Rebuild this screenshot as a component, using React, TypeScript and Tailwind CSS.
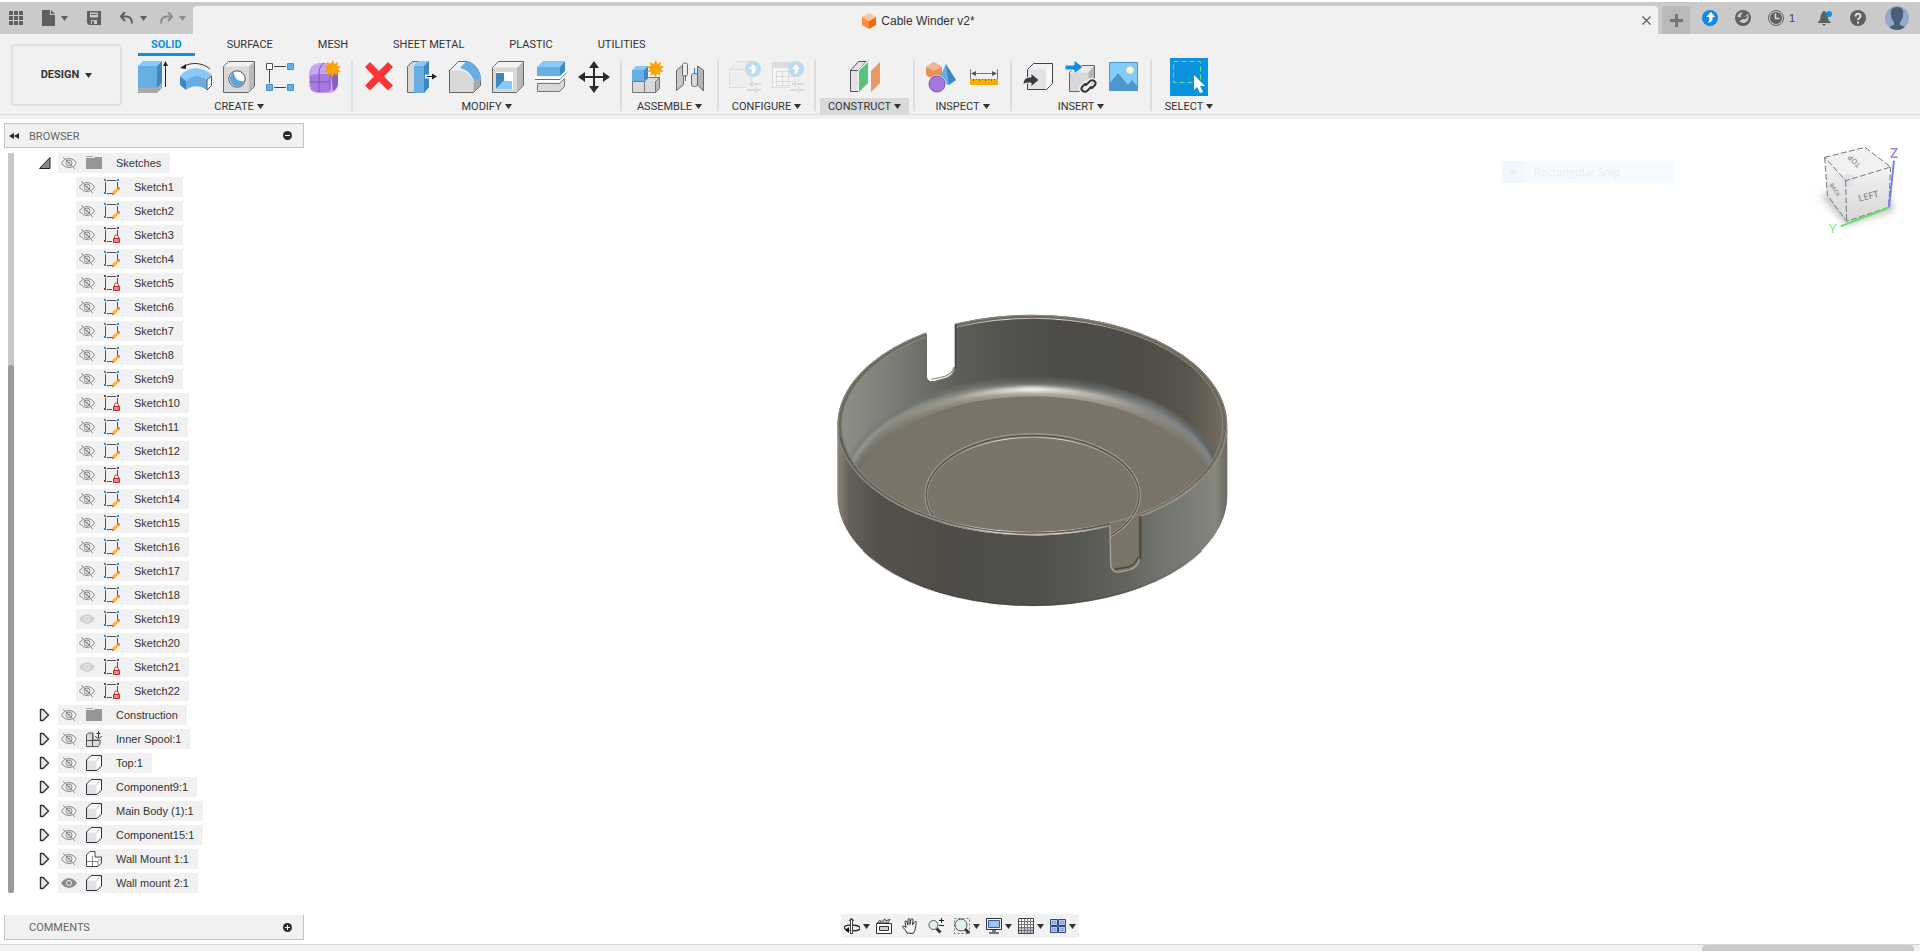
import { ReactNode, useState } from 'react';

type IconName =
  | 'extrude' | 'revolve' | 'hole' | 'sketch' | 'form'
  | 'delete' | 'pressPull' | 'fillet' | 'shell' | 'split' | 'move'
  | 'newComponent' | 'joint' | 'configure' | 'configTable' | 'plane'
  | 'interference' | 'measure' | 'derive' | 'link' | 'canvas';

interface ToolGroup {
  label: string;
  icons: IconName[];
}

interface TreeItem {
  name: string;
  kind: 'folder' | 'sketch' | 'locked' | 'anchored' | 'component' | 'assembly';
  visibility: 'hidden' | 'dimmed' | 'visible';
  child?: boolean;
  open?: boolean;
}

const TABS = ['SOLID', 'SURFACE', 'MESH', 'SHEET METAL', 'PLASTIC', 'UTILITIES'];

const GROUPS: ToolGroup[] = [
  { label: 'CREATE', icons: ['extrude', 'revolve', 'hole', 'sketch', 'form'] },
  { label: 'MODIFY', icons: ['delete', 'pressPull', 'fillet', 'shell', 'split', 'move'] },
  { label: 'ASSEMBLE', icons: ['newComponent', 'joint'] },
  { label: 'CONFIGURE', icons: ['configure', 'configTable'] },
  { label: 'CONSTRUCT', icons: ['plane'] },
  { label: 'INSPECT', icons: ['interference', 'measure'] },
  { label: 'INSERT', icons: ['derive', 'link', 'canvas'] },
];

const LOCKED_SKETCHES = [3, 5, 10, 13, 21, 22];
const DIMMED_SKETCHES = [19, 21];

const TREE: TreeItem[] = [
  { name: 'Sketches', kind: 'folder', visibility: 'hidden', open: true },
  ...Array.from({ length: 22 }, (_, i): TreeItem => ({
    name: `Sketch${i + 1}`,
    kind: LOCKED_SKETCHES.includes(i + 1) ? 'locked' : 'sketch',
    visibility: DIMMED_SKETCHES.includes(i + 1) ? 'dimmed' : 'hidden',
    child: true,
  })),
  { name: 'Construction', kind: 'folder', visibility: 'hidden' },
  { name: 'Inner Spool:1', kind: 'anchored', visibility: 'hidden' },
  { name: 'Top:1', kind: 'component', visibility: 'hidden' },
  { name: 'Component9:1', kind: 'component', visibility: 'hidden' },
  { name: 'Main Body (1):1', kind: 'component', visibility: 'hidden' },
  { name: 'Component15:1', kind: 'component', visibility: 'hidden' },
  { name: 'Wall Mount 1:1', kind: 'assembly', visibility: 'hidden' },
  { name: 'Wall mount 2:1', kind: 'component', visibility: 'visible' },
];

const Caret = ({ className = 'text-[#333]' }: { className?: string }) => (
  <svg width="7" height="5" viewBox="0 0 7 5" className={`shrink-0 ${className}`}>
    <path d="M0 0h7L3.5 5z" fill="currentColor" />
  </svg>
);

const STAR =
  'M24 -1l1.4 4.2 3.6-2.4-1 4.2 4.4.4-3.6 2.6 3.2 3-4.4-.2.8 4.2-3.2-2.6-1.8 4-1.8-4-3.2 2.6.8-4.2-4.2.2 3.2-3-3.8-2.6 4.4-.4-1-4.2 3.8 2.4z';

const TOOL_ICONS: Record<IconName, ReactNode> = {
  extrude: (
    <>
      <path d="M1 27h19l5-5v5l-5 5H1z" fill="#a9a9a9" />
      <path d="M1 5h19v22H1z" fill="#66aee3" />
      <path d="M1 5l5-5h19l-5 5z" fill="#87c9fb" />
      <path d="M20 5l5-5v22l-5 5z" fill="#3f88bd" />
      <path d="M28.5 26V4" stroke="#222" />
      <path d="M28.5 0l2.5 5h-5z" fill="#222" />
    </>
  ),
  revolve: (
    <>
      <path d="M0 15C9 5 23 5 32 14l-5 5C20 13 12 14 6 20z" fill="#87c9fb" />
      <path d="M0 15l6 5v9l-6-5z" fill="#3f88bd" />
      <path d="M6 20c6-6 14-7 21-1v10c-7-5-15-5-21 0z" fill="#66aee3" />
      <path d="M27 19l4.500-4v9.500l-4.500 4.500z" fill="#fff" stroke="#555" />
      <path d="M3 6C10 1 22 1 30 8" fill="none" stroke="#333" />
      <path d="M0 7l6-4v5z" fill="#222" />
    </>
  ),
  hole: (
    <>
      <path d="M.5 5.500L5.500.5h26v25l-6 6H.5z" fill="#d8d8d8" stroke="#666" />
      <path d="M1 5.500L5.500 1H31l-5 4.500z" fill="#f1f1f1" />
      <path d="M26 5.500L31 1v24.500L26 31z" fill="#b9b9b9" />
      <circle cx="14" cy="18" r="8.200" fill="#fff" stroke="#555" />
      <path d="M11 11c0 6 4 10 10 9-1 8-14 7-14-2 0-3 2-6 4-7z" fill="#5ba5dc" />
    </>
  ),
  sketch: (
    <>
      <path d="M8 5.500h12M3.500 9v13M8 26.500h12" stroke="#444" />
      <path d="M.5 2.500h6v6h-6z" fill="#fff" stroke="#555" />
      <path d="M21.500 2.500h6v6h-6zM.5 23.500h6v6h-6zM21.500 23.500h6v6h-6z" fill="#66aee3" stroke="#4c94c9" />
    </>
  ),
  form: (
    <>
      <path d="M0 14c0-7 4-12 11-12h9c7 0 9 5 9 10v10c0 6-4 10-9 10H9c-6 0-9-4-9-9z" fill="#c9a5f2" />
      <path d="M22 12h7v10c0 4-2 6-5 8z" fill="#8a5cc4" />
      <path d="M1 15c3-2 7-2 9-2h11v17c-6 2-15 2-18-1-2-3-2-9-2-14z" fill="#a87ae0" />
      <path d="M10 13v18M1 21h20M10 13c0-6 2-9 5-11M21 13c3-2 6-3 8-3M21 13v16" fill="none" stroke="#7d51b5" />
      <path d={STAR} fill="#f7a400" />
    </>
  ),
  delete: <path d="M2 6l5-5 9 9 9-9 5 5-9 9.500 9 9-5 5-9-9-9 9-5-5 9-9z" fill="#fb3434" />,
  pressPull: (
    <>
      <path d="M1.500 5.500l5-5h14l-5 5v26h-14z" fill="#d8d8d8" stroke="#666" />
      <path d="M8 5l5-5h10v26l-5 6H8z" fill="#66aee3" />
      <path d="M8 5l5-5h10l-5 5z" fill="#87c9fb" />
      <path d="M18 5l5-5v26l-5 6z" fill="#3f88bd" />
      <path d="M19 13.500h8v-3l5 5-5 5v-3h-8z" fill="#f1f1f1" />
      <path d="M21 15.500h6" stroke="#222" strokeWidth="1" />
      <path d="M26 12.500l5 3-5 3z" fill="#222" />
    </>
  ),
  fillet: (
    <>
      <path d="M.5 9.500L9.500.5H17c8 1 14 8 14.500 18v6l-7 7H.5z" fill="#f1f1f1" stroke="#666" />
      <path d="M.5 9.500H11c7 1 13 6 13.500 14v8H.5z" fill="#d8d8d8" />
      <path d="M24.500 21l7-4v7l-7 7z" fill="#a9a9a9" />
      <path d="M11 7l6-6.500c8 1 14 8 15 17l-7 3c-2-7-7-12-14-13.500z" fill="#66aee3" />
      <path d="M.5 9.500L9.500.5H12M.5 9.500v22h24l7-7v-4" fill="none" stroke="#666" />
    </>
  ),
  shell: (
    <>
      <path d="M.5 6.500l6-6h25v24l-7 7H.5z" fill="#d8d8d8" stroke="#666" />
      <path d="M1 6.500L6.500 1H31l-6 5.500z" fill="#f3f3f3" />
      <path d="M25 7l6-6v23.500L25 31z" fill="#b9b9b9" />
      <path d="M4 11h17v17H4z" fill="#fff" />
      <path d="M4 12h8v8l-8 8z" fill="#3f88bd" />
      <path d="M12 12h9v8h-9z" fill="#fff" />
      <path d="M4 28l7-8h9v8z" fill="#87c9fb" />
    </>
  ),
  split: (
    <>
      <path d="M2.500 22.500h22l5-5v8l-5 5h-22z" fill="#d8d8d8" stroke="#777" />
      <path d="M2 6h23v9H2z" fill="#66aee3" />
      <path d="M2 6l6-6h22l-5 6z" fill="#87c9fb" />
      <path d="M25 6l5-6v10l-5 5z" fill="#3f88bd" />
      <path d="M0 18.500h25l7-7" fill="none" stroke="#fff" strokeWidth="4" />
      <path d="M0 18.500h25l7-7" fill="none" stroke="#1485d6" strokeWidth="1" />
    </>
  ),
  move: (
    <>
      <path d="M16 4v24M4 16h24" stroke="#2b2b2b" strokeWidth="2" />
      <path d="M16 0l5 7H11zM16 32l5-7H11zM0 16l7-5v10zM32 16l-7-5v10z" fill="#2b2b2b" />
    </>
  ),
  newComponent: (
    <>
      <path d="M.5 20.500h12v11H.5zM12.500 20.500l4-4h11l-4 4v11h-11z" fill="#dadada" stroke="#777" />
      <path d="M23.500 20.500l4-4v11l-4 4z" fill="#b9b9b9" stroke="#777" />
      <path d="M0 9h12v11H0z" fill="#66aee3" />
      <path d="M0 9l4-4h12l-4 4z" fill="#87c9fb" />
      <path d="M12 9l4-4v12l-4 3z" fill="#3f88bd" />
      <path d={STAR} fill="#f7a400" />
    </>
  ),
  joint: (
    <>
      <path d="M1.500 9.500l7-6v20l-7 6z" fill="#c8c8c8" stroke="#666" />
      <path d="M7.500 3.500c1-2 5-2 5 0v10c0 2-4 2-5 1z" fill="#ededed" stroke="#666" />
      <path d="M28.500 9l-6-4v19l6 6z" fill="#b5b5b5" stroke="#666" />
      <path d="M16.500 14c1-2 6-2 6 0v10c-1 2-5 2-6 0z" fill="#dadada" stroke="#666" />
      <path d="M10.500 14v6M19.500 7v6" stroke="#1485d6" strokeWidth="1" />
    </>
  ),
  configure: (
    <>
      <path d="M.5 8.500l8-8H22v26H.5z" fill="#eee" stroke="#ddd" />
      <path d="M1 8.500h17" stroke="#ddd" />
      <circle cx="24" cy="8" r="8" fill="#bcdcf1" />
      <path d="M24 3l-4 5h2c2 1 1 3 0 5 4-1 5-2 4-5h2z" fill="#fff" />
      <path d="M18 21h14v11H18z" fill="#f1f1f1" />
      <path d="M20 23h12M18 29h14" stroke="#d9d9d9" strokeWidth="2" />
      <path d="M23 20v6M27 26v6" stroke="#cfe2ee" strokeWidth="2" />
    </>
  ),
  configTable: (
    <>
      <path d="M.5 1.500h26v25H.5z" fill="#f4f4f4" stroke="#dcdcdc" />
      <path d="M0 1h27v6H0z" fill="#ddd" />
      <path d="M4 10.500h19M4 15.500h19M4 20.500h19M4.500 10v14M10.500 10v14M16.500 10v14M22.500 10v14M4 24.500h19" stroke="#ddd" />
      <circle cx="24" cy="8" r="8" fill="#bcdcf1" />
      <path d="M24 3l-4 5h2c2 1 1 3 0 5 4-1 5-2 4-5h2z" fill="#fff" />
      <path d="M18 21h14v11H18z" fill="#f1f1f1" />
      <path d="M20 23h12M18 29h14" stroke="#d9d9d9" strokeWidth="2" />
      <path d="M23 20v6M27 26v6" stroke="#cfe2ee" strokeWidth="2" />
    </>
  ),
  plane: (
    <>
      <path d="M1.500 9.500l8-9H17v22l-8 8H1.500z" fill="#e3e3e3" stroke="#555" />
      <path d="M1.500 9.500H9l8-9" fill="none" stroke="#555" />
      <path d="M9 9l10-10v24L9 31z" fill="#f1f1f1" />
      <path d="M10 10l9-9v21l-9 9z" fill="#59c37d" />
      <path d="M22 10l9-9v21l-9 9z" fill="#e69a66" />
    </>
  ),
  interference: (
    <>
      <path d="M1 6l8-5 8 5v8l-8 5-8-5z" fill="#e59158" />
      <path d="M1 6l8-5 8 5-8 4z" fill="#f2b78f" />
      <path d="M21 3l10 16-7 5-10-5z" fill="#3986c0" />
      <path d="M21 3l3 21-10-5z" fill="#66aee3" />
      <circle cx="12" cy="23" r="9" fill="#f1f1f1" />
      <circle cx="12" cy="23" r="8" fill="#a27add" stroke="#7f52bd" />
    </>
  ),
  measure: (
    <>
      <path d="M2.500 8v10M29.500 8v10M4 12.500h24" stroke="#777" />
      <path d="M3 12.500l5-2.500v5zM29 12.500l-5-2.500v5z" fill="#555" />
      <path d="M2 18h28v6H2z" fill="#f9ad00" />
      <path d="M5.500 18v2M8.500 18v1M11.500 18v2M14.500 18v1M17.500 18v2M20.500 18v1M23.500 18v2M26.500 18v1" stroke="#8a6200" />
    </>
  ),
  derive: (
    <>
      <path d="M5.500 8.500l6-6h19v20l-6 6h-19z" fill="#f0f0f2" stroke="#444" />
      <path d="M6 8.500h18.500V28H6z" fill="#e2e3e8" />
      <path d="M24.500 8.500L30 3v19.500L24.500 28z" fill="#fafafa" />
      <path d="M1 24c0-6 3-8 8-8v-4l8 7-8 7v-4c-4 0-6 0-8 2z" fill="#3c3c3c" stroke="#f1f1f1" />
    </>
  ),
  link: (
    <>
      <path d="M4.500 11.500l6-7h19v20l-6 6h-19z" fill="#e9e9e9" stroke="#666" />
      <path d="M5 11.500h18.500V30H5z" fill="#d8d8d8" />
      <path d="M23.500 11.500L29 5v19.500L23.500 30z" fill="#b3b3b3" />
      <path d="M0 4h9V-1l9 7-9 7V9H0z" fill="#168be2" stroke="#f1f1f1" />
      <g fill="none" strokeLinecap="round">
        <path d="M21 24l4-4c3-2 7 1 5 4l-3 3M26 26l-4 4c-3 2-7-1-5-4l3-3" stroke="#f1f1f1" strokeWidth="5" />
        <path d="M21 24l4-4c3-2 7 1 5 4l-3 3M26 26l-4 4c-3 2-7-1-5-4l3-3" stroke="#333" strokeWidth="2" />
      </g>
    </>
  ),
  canvas: (
    <>
      <path d="M1 1h29v29H1z" fill="#84cbfd" />
      <circle cx="22" cy="9" r="3.500" fill="#fffbd0" stroke="#d8e8c0" />
      <path d="M1 23l9-11 10 12 4-5 6 7v4H1z" fill="#4c97cd" />
      <path d="M1.500 1.500h28v28h-28z" fill="none" stroke="#4c97cd" />
    </>
  ),
};

const ToolIcon = ({ name }: { name: IconName }) => (
  <svg width="32" height="32" viewBox="0 0 32 32" className="overflow-visible">
    {TOOL_ICONS[name]}
  </svg>
);

const GroupLabel = ({ label, active = false }: { label: string; active?: boolean }) => (
  <button
    type="button"
    className={`flex h-[17px] items-center gap-[3px] px-2 text-[11px] leading-4 text-[#333] ${
      active ? 'bg-[#d9d9d9]' : ''
    }`}
  >
    {label}
    <Caret />
  </button>
);

const TopBar = () => (
  <header className="mt-[2px] flex h-8 items-end bg-[#cacaca] text-[#5f5f5f]">
    <div className="flex h-8 w-[193px] shrink-0 items-center pl-[9px]">
      <button type="button" aria-label="Data panel">
        <svg width="14" height="14" viewBox="0 0 14 14" fill="currentColor">
          <path d="M0 0h4v4H0zM5 0h4v4H5zM10 0h4v4h-4zM0 5h4v4H0zM5 5h4v4H5zM10 5h4v4h-4zM0 10h4v4H0zM5 10h4v4H5zM10 10h4v4h-4z" />
        </svg>
      </button>
      <button type="button" aria-label="File" className="ml-[19px] flex items-center gap-[6px]">
        <svg width="13" height="16" viewBox="0 0 13 16" fill="currentColor">
          <path d="M0 0h8v5h5v11H0zM9 0l4 4H9z" />
        </svg>
        <Caret className="text-[#5f5f5f]" />
      </button>
      <button type="button" aria-label="Save" className="ml-[19px]">
        <svg width="14" height="14" viewBox="0 0 14 14">
          <path d="M0 0h14v14H2l-2-2z" fill="currentColor" />
          <path d="M3 1.500h8v5H3zM4 9h6v4H4z" fill="#cacaca" />
          <path d="M4 3h6v1H4zM5 10h2v3H5z" fill="currentColor" />
        </svg>
      </button>
      <button type="button" aria-label="Undo" className="ml-[19px] flex items-center gap-[7px]">
        <svg width="13" height="12" viewBox="0 0 13 12" fill="none" stroke="currentColor" strokeWidth="2">
          <path d="M5 0L1 4.500 5 9M1 4.500h5c4 0 6 2 6 7" />
        </svg>
        <Caret className="text-[#5f5f5f]" />
      </button>
      <button type="button" aria-label="Redo" className="ml-[13px] flex items-center gap-[6px] text-[#8e8e8e]">
        <svg width="13" height="12" viewBox="0 0 13 12" fill="none" stroke="currentColor" strokeWidth="2">
          <path d="M8 0l4 4.500L8 9M12 4.500H7c-4 0-6 2-6 7" />
        </svg>
        <Caret className="text-[#8e8e8e]" />
      </button>
    </div>

    <div className="flex h-7 flex-1 items-center rounded-t bg-[#f1f1f1] pl-1 pr-[6px] pt-px">
      <div className="flex flex-1 items-center justify-center gap-[5px]">
        <svg width="14" height="16" viewBox="0 0 14 16">
          <path d="M0 4l7 4v8l-7-4z" fill="#ff8b3d" />
          <path d="M14 4L7 8v8l7-4z" fill="#f56a00" />
          <path d="M0 4l7-4 7 4-7 4z" fill="#ffc49b" />
        </svg>
        <h1 className="font-['Liberation_Sans',sans-serif] text-xs text-[#333]">Cable Winder v2*</h1>
      </div>
      <button type="button" aria-label="Close document" className="flex w-3 justify-center">
        <svg width="9" height="9" viewBox="0 0 9 9" stroke="#666" strokeWidth="1.400">
          <path d="M.5.5l8 8M8.500.5l-8 8" />
        </svg>
      </button>
    </div>

    <button
      type="button"
      aria-label="New design"
      className="ml-1 flex h-7 w-7 items-center justify-center rounded-t bg-[#b9b9b9]"
    >
      <svg width="13" height="13" viewBox="0 0 13 13" fill="#757575">
        <path d="M5 0h3v5h5v3H8v5H5V8H0V5h5z" />
      </svg>
    </button>

    <div className="flex h-8 w-[230px] shrink-0 items-center pl-3">
      <button type="button" aria-label="Updates">
        <svg width="16" height="16" viewBox="0 0 16 16">
          <circle cx="8" cy="8" r="8" fill="#1389e5" />
          <path d="M9 2L4 7h3c1 2 0 4-1 6 4-1 5-3 4.500-6H13z" fill="#fff" />
        </svg>
      </button>
      <button type="button" aria-label="Extensions" className="ml-[17px]">
        <svg width="16" height="16" viewBox="0 0 16 16">
          <circle cx="8" cy="8" r="8" fill="currentColor" />
          <path d="M2.500 7c0-3 3-5 5-4.500v3L9 7l4-3.500c1.500 4 .5 9-4 9.500-2 .2-4-1-5-2l4-3z" fill="#cacaca" />
          <path d="M6 8c-1-3 1-5 3-5l-1 3 2 1 2.500-2c0 3-2 5-5 4l-4 3-1-2z" fill="currentColor" />
        </svg>
      </button>
      <button type="button" aria-label="Job status" className="ml-[17px] flex items-center gap-[5px]">
        <svg width="16" height="16" viewBox="0 0 16 16">
          <circle cx="8" cy="8" r="7.500" fill="none" stroke="currentColor" />
          <circle cx="8" cy="8" r="6" fill="currentColor" />
          <path d="M7.500 3.500v5h4" fill="none" stroke="#ddd" strokeWidth="1.500" />
        </svg>
        <span className="font-['Liberation_Sans',sans-serif] text-[11px] text-[#4b3a68]">1</span>
      </button>
      <button type="button" aria-label="Notifications" className="ml-[22px]">
        <svg width="16" height="16" viewBox="0 0 16 16" fill="currentColor">
          <path d="M1 12c3-2 2-4 3-7 .5-2 2-2.500 2-4h2c0 1.500 2 2 2.500 4 1 3 0 5 3 7v1H1zM5 14h4l-2 2z" />
          <circle cx="12" cy="4" r="3" fill="#0a93dc" />
        </svg>
      </button>
      <button type="button" aria-label="Help" className="ml-[17px]">
        <svg width="16" height="16" viewBox="0 0 16 16">
          <circle cx="8" cy="8" r="8" fill="currentColor" />
          <path d="M5.500 6.500C5.500 3 10.500 3 10.500 6c0 2-2.500 2-2.500 4M8 11.500v2" fill="none" stroke="#ddd" strokeWidth="2" />
        </svg>
      </button>
      <button type="button" aria-label="Account" className="ml-[19px]">
        <svg width="24" height="24" viewBox="0 0 24 24">
          <defs>
            <clipPath id="avatar"><circle cx="12" cy="12" r="12" /></clipPath>
          </defs>
          <g clipPath="url(#avatar)">
            <path d="M0 0h24v24H0z" fill="#95a9c6" />
            <path d="M12 1c5 0 7 3 6 7 0 4-1 6-3 8v3c3 1 5 2 7 5H2c2-3 4-4 7-5v-3c-2-2-3-4-3-8-1-4 1-7 6-7z" fill="#4b5d77" />
          </g>
        </svg>
      </button>
    </div>
  </header>
);

const Ribbon = () => {
  const [activeTab, setActiveTab] = useState('SOLID');

  return (
    <div className="flex h-[85px] border-b-4 border-[#f1f1f1] bg-[#f1f1f1] shadow-[inset_0_-1px_0_#dcdcdc]">
      <button
        type="button"
        className="ml-[11px] mt-[10px] flex h-[62px] w-[111px] shrink-0 items-center justify-center gap-[6px] rounded border-2 border-[#e0e0e0] text-[11px] font-bold text-[#333]"
      >
        DESIGN
        <Caret />
      </button>

      <div className="ml-[5px] flex flex-col">
        <nav className="flex gap-[19px] pl-[11px]">
          {TABS.map((tab) => (
            <button
              key={tab}
              type="button"
              onClick={() => setActiveTab(tab)}
              className={`h-[22px] whitespace-nowrap border-b-[3px] px-[13px] pt-[3px] text-[11px] leading-4 ${
                tab === activeTab
                  ? 'border-[#0a93dc] font-bold text-[#0a93dc]'
                  : 'border-transparent text-[#333]'
              }`}
            >
              {tab}
            </button>
          ))}
        </nav>

        <div className="flex">
          {GROUPS.map(({ label, icons }) => (
            <div key={label} className="flex">
              <div
                className={`flex flex-col items-center pt-[5px] ${
                  label === 'CONSTRUCT' ? 'w-[97px]' : 'px-[10px]'
                }`}
              >
                <div className="flex gap-[11px]">
                  {icons.map((icon) => (
                    <button key={icon} type="button" aria-label={icon}>
                      <ToolIcon name={icon} />
                    </button>
                  ))}
                </div>
                <div className="mt-[5px] flex w-0 justify-center">
                  <GroupLabel label={label} active={label === 'CONSTRUCT'} />
                </div>
              </div>
              <div className="mt-1 h-[51px] w-[2px] bg-[#dedede]" />
            </div>
          ))}
          <div className="flex w-[74px] flex-col items-center pt-[2px]">
            <button type="button" aria-label="Select" className="bg-[#0a93dc]">
              <svg width="38" height="38" viewBox="0 0 38 38">
                <path d="M3.500 3.500h27v21h-27z" fill="none" stroke="#6fe08c" strokeDasharray="5 3" />
                <path d="M24 17v15l3-3 3 6 3-1-3-6h5z" fill="#fff" />
              </svg>
            </button>
            <div className="mt-[2px]">
              <GroupLabel label="SELECT" />
            </div>
          </div>
        </div>
      </div>
    </div>
  );
};

const EyeIcon = ({ visibility }: { visibility: TreeItem['visibility'] }) => {
  if (visibility === 'hidden') {
    return (
      <svg width="16" height="14" viewBox="0 0 16 14" fill="none" stroke="#8d8d8d">
        <path d="M.5 7C4 1 12 1 15.500 7 12 13 4 13 .5 7z" />
        <circle cx="8" cy="7" r="3" />
        <circle cx="8" cy="7" r="1" />
        <path d="M2 1l12 12" />
      </svg>
    );
  }
  const color = visibility === 'dimmed' ? '#d2d2d2' : '#8b8b8b';
  return (
    <svg width="16" height="14" viewBox="0 0 16 14">
      <path d="M0 7C4 .5 12 .5 16 7 12 13.500 4 13.500 0 7z" fill={color} />
      <circle cx="8" cy="7" r="2.500" fill={color} stroke="#f1f1f1" />
    </svg>
  );
};

const KindIcon = ({ kind }: { kind: TreeItem['kind'] }) => (
  <svg width="16" height="16" viewBox="0 0 16 16" className="overflow-visible">
    {kind === 'folder' && (
      <>
        <path d="M0 1h7v1H0z" fill="#aaa" />
        <path d="M0 3h8l1-1h7v12H0z" fill="#969696" />
      </>
    )}
    {(kind === 'sketch' || kind === 'locked') && (
      <>
        <path d="M3 1.500h9M1.500 3v10M13.500 3v6M3 14.500h5" stroke="#555" />
        <path
          d="M0 0h2v2H0zM13 0h2v2h-2zM0 13h2v2H0z"
          fill={kind === 'sketch' ? '#168be2' : '#555'}
        />
      </>
    )}
    {kind === 'sketch' && (
      <>
        <path d="M8 13l5-4 2 2-4 4-2 1z" fill="#fbb93a" />
        <path d="M13 9l1-1 2 1-1 2z" fill="#f4434b" />
        <path d="M8 14l2 1-2 1z" fill="#666" />
      </>
    )}
    {kind === 'locked' && (
      <>
        <path d="M10.500 11V9.500c0-2 4-2 4 0V11" fill="none" stroke="#c43a3d" />
        <path d="M9.500 11.500h6v4h-6z" fill="#dd8c8e" stroke="#c4282c" />
      </>
    )}
    {kind === 'component' && (
      <>
        <path d="M.5 5L5 .5h10.500V11L11 15.500H.5z" fill="#fff" stroke="#333" strokeLinejoin="round" />
        <path d="M1 5.500h9.500V15H1z" fill="#dfe2e8" />
        <path d="M10.500 5.500L15 1" stroke="#bbb" />
      </>
    )}
    {kind === 'assembly' && (
      <>
        <path d="M.5 4L4 .5h5V6h6.500v6L12 15.500H.5z" fill="#fff" stroke="#444" strokeLinejoin="round" />
        <path d="M1 10.500h11l3-3M6.500 15V5M12 10.500V15" fill="none" stroke="#888" />
      </>
    )}
    {kind === 'anchored' && (
      <>
        <path d="M.5 4l2-2H7v7h7v4l-2 2.500H.5z" fill="#dcdcdc" stroke="#555" />
        <path d="M1 9.500h12M6.500 3v12" stroke="#555" />
        <path d="M12.500 0v7M10.500 2.500h4M9.500 5c1 3 5 3 6 0" fill="none" stroke="#333" />
      </>
    )}
  </svg>
);

const Expander = ({ open }: { open?: boolean }) => (
  <svg width="12" height="14" viewBox="0 0 12 14">
    {open ? (
      <path d="M.5 12.500L11 1.500v11z" fill="#888" stroke="#222" />
    ) : (
      <path d="M1.500 1.500H4L9.500 7 4 12.500H1.500z" fill="#e8e8ec" stroke="#333" strokeWidth="1.400" />
    )}
  </svg>
);

const BrowserTree = () => (
  <div className="ml-1 mt-[5px] flex">
    <div className="flex w-[6px] flex-col bg-[#c9c9c9]">
      <div className="mt-[212px] flex-1 rounded-full bg-[#9b9b9b]" />
    </div>
    <ul className="ml-[25px] flex flex-col gap-1">
      {TREE.map((item) => (
        <li key={item.name} className="flex h-5 items-center">
          <div className={item.child ? 'w-[37px]' : 'w-[19px]'}>
            {!item.child && (
              <button type="button" aria-label={`Expand ${item.name}`} className="flex">
                <Expander open={item.open} />
              </button>
            )}
          </div>
          <div className="flex h-5 items-center bg-[#f1f1f1] pl-[3px] pr-[9px]">
            <button type="button" aria-label={`Toggle ${item.name}`}>
              <EyeIcon visibility={item.visibility} />
            </button>
            <button type="button" className="ml-[9px] flex items-center gap-[14px] whitespace-nowrap">
              <KindIcon kind={item.kind} />
              <span className="font-['Liberation_Sans',sans-serif] text-[11px] leading-5 text-[#333]">
                {item.name}
              </span>
            </button>
          </div>
        </li>
      ))}
    </ul>
  </div>
);

const PanelHeader = ({ title, collapsed = false }: { title: string; collapsed?: boolean }) => (
  <div
    className={`flex h-[25px] items-center border border-[#c4c4c4] bg-[#f1f1f1] pl-1 pr-[11px] ${
      collapsed ? 'border-t-0' : ''
    }`}
  >
    <div className="w-5">
      {!collapsed && (
        <svg width="10" height="6" viewBox="0 0 10 6" fill="#2b2b2b">
          <path d="M5 0v6L0 3zM10 0v6L5 3z" />
        </svg>
      )}
    </div>
    <h2 className="flex-1 pt-[2px] text-[11px] leading-4 text-[#666]">{title}</h2>
    <button type="button" aria-label={`Toggle ${title}`}>
      <svg width="9" height="9" viewBox="0 0 9 9">
        <circle cx="4.500" cy="4.500" r="4.500" fill="#2b2b2b" />
        <path d={collapsed ? 'M2 4.500h5M4.500 2v5' : 'M2 4.500h5'} stroke="#fff" />
      </svg>
    </button>
  </div>
);

// Bands of the inner fillet, from the wall down to the floor
const FILLET_BANDS = Array.from({ length: 15 }, (_, i) => i / 14);
const FILLET_GRADIENTS = [
  ['#7f827d', '#6b6c66', '#5d5d58', '#5d5f5c', '#6c706f', '#5e5f5c'],
  ['#9a9e9c', '#85877f', '#777977', '#7c8180', '#7e8583', '#84898a'],
  ['#707067', '#a29c8f', '#f4f2ee', '#b9b3a8', '#8a8c86', '#77786f'],
  ['#69675d', '#8f887b', '#aaa396', '#a09a8d', '#8b8577', '#69665c'],
];

const BODY_OUTLINE =
  'M52 402A585 331 0 0 0 870 706L872 820Q874 846 898 843L930 836Q956 828 958 800V679A585 331 0 0 0 1222 402V614A585 331 0 0 1 52 614Z';
const BACK_NOTCH = 'M319 60V258Q322 276 345 271L378 262Q403 254 405 228V60Z';

const BowlModel = () => (
  <svg width="430" height="330" viewBox="0 0 1290 990" role="img" aria-label="Cable winder body">
    <defs>
      <linearGradient id="innerWall" gradientUnits="userSpaceOnUse" x1="52" x2="1222" y1="0" y2="0">
        <stop offset="0" stopColor="#8e9188" />
        <stop offset="0.12" stopColor="#7e8179" />
        <stop offset="0.22" stopColor="#6c6e67" />
        <stop offset="0.32" stopColor="#5c5c56" />
        <stop offset="0.44" stopColor="#53524c" />
        <stop offset="0.55" stopColor="#4e4c46" />
        <stop offset="0.78" stopColor="#4f4c46" />
        <stop offset="0.9" stopColor="#59544c" />
        <stop offset="1" stopColor="#777063" />
      </linearGradient>
      <linearGradient id="outerWall" gradientUnits="userSpaceOnUse" x1="52" x2="1222" y1="0" y2="0">
        <stop offset="0" stopColor="#8b8477" />
        <stop offset="0.03" stopColor="#66625a" />
        <stop offset="0.1" stopColor="#55514a" />
        <stop offset="0.3" stopColor="#4e4c46" />
        <stop offset="0.52" stopColor="#504f49" />
        <stop offset="0.62" stopColor="#585852" />
        <stop offset="0.74" stopColor="#62645d" />
        <stop offset="0.82" stopColor="#70736c" />
        <stop offset="0.92" stopColor="#7c7f77" />
        <stop offset="0.97" stopColor="#85877e" />
        <stop offset="1" stopColor="#6c6a62" />
      </linearGradient>
      <linearGradient id="rimLight" gradientUnits="userSpaceOnUse" x1="52" x2="1222" y1="0" y2="0">
        <stop offset="0" stopColor="#85827a" />
        <stop offset="0.3" stopColor="#98928a" />
        <stop offset="0.43" stopColor="#e2dfd8" />
        <stop offset="0.5" stopColor="#b6afa2" />
        <stop offset="0.57" stopColor="#dedbd3" />
        <stop offset="0.7" stopColor="#9a9488" />
        <stop offset="1" stopColor="#8a867a" />
      </linearGradient>
      {FILLET_GRADIENTS.map((colors, i) => (
        <linearGradient key={i} id={`fillet${i}`} gradientUnits="userSpaceOnUse" x1="52" x2="1222" y1="0" y2="0">
          {colors.map((color, j) => (
            <stop key={j} offset={[0, 0.3, 0.5, 0.65, 0.8, 1][j]} stopColor={color} />
          ))}
        </linearGradient>
      ))}
      <filter id="soften"><feGaussianBlur stdDeviation="4" /></filter>
      <clipPath id="opening">
        <ellipse cx="637" cy="403" rx="572" ry="321" />
        <path d="M860 640L958 600V800Q956 828 930 836L898 843Q874 846 872 820Z" />
      </clipPath>
    </defs>

    <ellipse cx="637" cy="402" rx="585" ry="331" fill="#6e695f" />
    <ellipse cx="637" cy="402" rx="583" ry="329" fill="none" stroke="#8f897d" strokeWidth="3" />
    <g clipPath="url(#opening)">
      <path d="M40 60h1200v800H40z" fill="url(#innerWall)" />
      <g filter="url(#soften)">
        {FILLET_BANDS.map((t) => (
          <ellipse
            key={t}
            cx="637"
            cy={582 + 39 * t}
            rx={570 - 30 * t}
            ry={322 - 16 * t}
            fill={`url(#fillet${Math.min(3, Math.floor(t * 4))})`}
          />
        ))}
      </g>
      <ellipse cx="637" cy="622" rx="540" ry="306" fill="#7a7368" />
      <g fill="none">
        <ellipse cx="638" cy="612" rx="323" ry="183" stroke="#9b9a90" strokeWidth="4" />
        <ellipse cx="638" cy="612" rx="319" ry="179" stroke="#55544d" strokeWidth="4" />
        <ellipse cx="638" cy="613" rx="316" ry="174" stroke="url(#rimLight)" strokeWidth="3" />
      </g>
    </g>
    <ellipse cx="637" cy="403" rx="572" ry="321" fill="none" stroke="url(#rimLight)" strokeWidth="3" />

    <path d={BODY_OUTLINE} fill="url(#outerWall)" />
    <path d="M130 780A583 322 0 0 0 1144 780" fill="none" stroke="#45433d" strokeWidth="5" opacity="0.5" />
    <path d="M60 440A577 325 0 0 0 870 699" fill="none" stroke="#5b574f" strokeWidth="6" />
    <path d="M53 420A585 331 0 0 0 870 703M960 675A585 331 0 0 0 1221 420" fill="none" stroke="url(#rimLight)" strokeWidth="4" />
    <path d="M870 704L872 820Q874 846 898 843L930 836Q956 828 958 800" fill="none" stroke="#a5a399" strokeWidth="4" />
    <path d="M885 834L925 828Q946 820 955 798" fill="none" stroke="#46443e" strokeWidth="4" />
    <path d="M961 676V805" stroke="#4c4a44" strokeWidth="7" />

    <path d={BACK_NOTCH} fill="#fff" />
    <path d="M319 130V258Q322 276 345 271L378 262Q403 254 405 228" fill="none" stroke="#6d6b63" strokeWidth="4" />
    <path d="M334 265L375 256Q398 248 402 228" fill="none" stroke="#9b968a" strokeWidth="4" />
    <path d="M407 100V232" stroke="#4c4a44" strokeWidth="6" />
  </svg>
);

const ViewCube = () => (
  <svg
    width="100"
    height="110"
    viewBox="0 0 300 330"
    className="absolute right-[10px] top-[11px] font-['Open_Sans',sans-serif] font-semibold"
  >
    <defs>
      <linearGradient id="cubeSide" x1="0" x2="0" y1="0" y2="1">
        <stop offset="0" stopColor="#f4f4f4" />
        <stop offset="1" stopColor="#d6d6d6" />
      </linearGradient>
      <filter id="cubeShadow" x="-30%" y="-30%" width="160%" height="160%">
        <feGaussianBlur stdDeviation="11" />
      </filter>
    </defs>
    <path d="M30 195L110 285 255 240 230 190z" fill="#999" opacity="0.6" filter="url(#cubeShadow)" />
    <path d="M44 82L165 52 242 111 107 152z" fill="#f1f1f1" />
    <path d="M44 82L107 152 110 274 52 195z" fill="url(#cubeSide)" />
    <path d="M107 152L242 111 236 232 110 274z" fill="url(#cubeSide)" />
    <path d="M94 140L112 130 132 138 130 168 108 175 94 165z" fill="#dfe2e7" />
    <path
      d="M44 82L165 52 242 111 107 152zM44 82L52 195 110 274 236 232 242 111M107 152L110 274"
      fill="none"
      stroke="#777"
      strokeWidth="3"
      strokeDasharray="18 7"
    />
    <g fill="#8a8d93">
      <text x="148" y="215" fontSize="28" transform="rotate(-14 148 215)">LEFT</text>
      <text x="138" y="88" fontSize="22" textAnchor="middle" transform="rotate(225 138 88)">TOP</text>
      <text x="58" y="164" fontSize="17" transform="rotate(57 58 164)">BACK</text>
    </g>
    <path d="M252 92L237 232" stroke="#7c7cf5" strokeWidth="6" />
    <path d="M237 233L92 289" stroke="#62e562" strokeWidth="6" />
    <text x="240" y="84" fontSize="42" fill="#8c8cf6">Z</text>
    <text x="56" y="309" fontSize="40" fill="#93f293">Y</text>
  </svg>
);

const NAV_ICONS: { label: string; caret?: boolean; art: ReactNode }[] = [
  {
    label: 'Orbit',
    caret: true,
    art: (
      <>
        <path d="M3 12C-2 10 0 7 7.500 7s11 3 7 5c-2 1-5 1-9 0" fill="none" stroke="#333" strokeWidth="1.400" />
        <path d="M7.500 1v15" stroke="#444" strokeWidth="3" />
        <path d="M7.500 2v13" stroke="#fff" />
        <path d="M5 3l2.500-3L10 3" fill="none" stroke="#444" />
        <path d="M1 12l4-3v6z" fill="#111" />
      </>
    ),
  },
  {
    label: 'Look At',
    art: (
      <>
        <path d="M1 5l3-3 1 2 4-3 1 2 4-2-2 4z" fill="#b9bcc2" stroke="#555" />
        <path d="M.5 5.500h15v10H.5z" fill="#fff" stroke="#333" />
        <path d="M3.500 8.500h9v4h-9z" fill="#cfcfd3" stroke="#333" />
      </>
    ),
  },
  {
    label: 'Pan',
    art: (
      <path
        d="M5 15C4 12 1 10 .5 8.500c1-1 2-.5 3.500 1L3 4c0-1.500 1.500-1.500 2 0l1 3V2c0-2 2-2 2 0v4.500L9 1.500c.5-1.500 2-1 2 .5l-.5 5L12.500 4c.7-1.300 2-.7 1.700.7C13.500 8 14 12 11 15.500z"
        fill="#f5f5fb"
        stroke="#333"
      />
    ),
  },
  {
    label: 'Zoom',
    art: (
      <>
        <path d="M8.500 10.500l4 4" stroke="#333" strokeWidth="3" />
        <circle cx="5.500" cy="7" r="4.500" fill="#dff0f3" stroke="#555" />
        <path d="M13.500 0v5M11 2.500h5M11 7.500h5" stroke="#222" />
      </>
    ),
  },
  {
    label: 'Fit',
    caret: true,
    art: (
      <>
        <path d="M.5.5h15v15H.5z" fill="none" stroke="#777" strokeDasharray="2 2" />
        <path d="M11 11l4 4" stroke="#333" strokeWidth="3" />
        <circle cx="7" cy="7" r="6" fill="#dff0f3" stroke="#555" />
      </>
    ),
  },
  {
    label: 'Display Settings',
    caret: true,
    art: (
      <>
        <path d="M.5.5h15v11H.5z" fill="#f4f4f4" stroke="#333" />
        <path d="M2.500 2.500h11v7h-11z" fill="#9fc2f0" stroke="#2e5da0" />
        <path d="M6 12h4v2h3v2H3v-2h3z" fill="#777" />
      </>
    ),
  },
  {
    label: 'Grid and Snaps',
    caret: true,
    art: (
      <>
        <path d="M.5.5h15v15H.5z" fill="#fff" stroke="#444" />
        <path d="M1 10h14v5H1z" fill="#b9c4da" />
        <path d="M3.500 1v14M6.500 1v14M9.500 1v14M12.500 1v14M1 3.500h14M1 6.500h14M1 9.500h14M1 12.500h14" stroke="#777" />
      </>
    ),
  },
  {
    label: 'Viewports',
    caret: true,
    art: (
      <>
        <path d="M.5 1.500h7v6h-7zM8.500 1.500h7v6h-7zM.5 8.500h7v6h-7zM8.500 8.500h7v6h-7z" fill="#b4ccf0" stroke="#2c4a80" />
        <path d="M2.500 3.500h3v2h-3zM10.500 3.500h3v2h-3zM2.500 10.500h3v2h-3zM10.500 10.500h3v2h-3z" fill="none" stroke="#7fa0d3" />
      </>
    ),
  },
];

const NavigationBar = () => (
  <div className="absolute bottom-[6px] left-1/2 flex h-6 -translate-x-1/2 items-center gap-[6px] bg-[#f1f1f1] px-[3px]">
    {NAV_ICONS.map(({ label, caret, art }) => (
      <button
        key={label}
        type="button"
        aria-label={label}
        className={`flex items-center gap-[3px] ${caret ? '' : 'pr-1'}`}
      >
        <svg width="16" height="16" viewBox="0 0 16 16">
          {art}
        </svg>
        {caret && <Caret />}
      </button>
    ))}
  </div>
);

export default function App() {
  return (
    <div className="flex min-h-screen flex-col bg-white font-['Roboto',sans-serif]">
      <TopBar />
      <Ribbon />

      <main className="relative flex flex-1">
        <aside className="z-10 ml-1 flex w-[300px] flex-col pt-1">
          <PanelHeader title="BROWSER" />
          <BrowserTree />
          <div className="mb-1 mt-auto">
            <PanelHeader title="COMMENTS" collapsed />
          </div>
        </aside>

        <div className="absolute left-1/2 top-[172px] -ml-[140px]">
          <BowlModel />
        </div>
        <div className="absolute right-[245px] top-[42px] flex h-[22px] w-[173px] items-center bg-[#f5fbfe]">
          <span className="flex h-[22px] w-[22px] items-center justify-center bg-[#f0f8ff]">
            <span className="h-[6px] w-[6px] rounded-full bg-[#ededed]" />
          </span>
          <span className="pl-[10px] font-['Open_Sans',sans-serif] text-[11px] text-[#eeeaea]">
            Rectangular Snip
          </span>
        </div>
        <ViewCube />
        <NavigationBar />
      </main>

      <footer className="flex h-[7px] justify-end border-t border-[#d6d6d6] bg-[#f1f1f1] pr-[6px]">
        <div className="h-[6px] w-[212px] rounded-t bg-[#cacaca]" />
      </footer>
    </div>
  );
}
